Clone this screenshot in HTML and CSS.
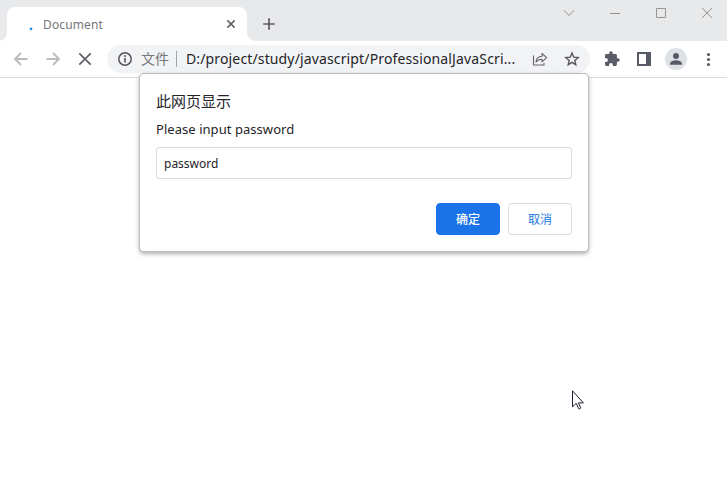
FILE: index.html
```html
<!DOCTYPE html>
<html lang="zh-CN">
<head>
<meta charset="utf-8">
<title>Document</title>
<link rel="stylesheet" href="styles.css">
</head>
<body>
<div class="browser">
  <header class="tabstrip">
    <div class="tab">
      <svg class="spinner" width="16" height="16" viewBox="0 0 16 16"><path d="M7 13.600 9 12.200" stroke="#1a86e0" stroke-width="2.200" fill="none"/></svg>
      <span class="tab-title">Document</span>
      <svg width="16" height="16" viewBox="0 0 16 16"><path d="m4.400 4.400 7.200 7.200m0-7.200-7.200 7.200" stroke="#5e6064" stroke-width="1.500"/></svg>
    </div>
    <svg class="new-tab" width="16" height="16" viewBox="0 0 16 16"><path d="M8 2.200v11.600M2.200 8h11.600" stroke="#5f5a62" stroke-width="1.700"/></svg>
    <div class="window-buttons">
      <svg width="46" height="26" viewBox="0 0 46 26"><path d="m18 10.300 5 5.200 5-5.200"/></svg>
      <svg width="46" height="26" viewBox="0 0 46 26"><path d="M18 13.500h10"/></svg>
      <svg width="46" height="26" viewBox="0 0 46 26"><path d="M18.500 8.500h9v9h-9z"/></svg>
      <svg width="46" height="26" viewBox="0 0 46 26"><path d="m18 8 10 10m0-10L18 18"/></svg>
    </div>
  </header>
  <nav class="toolbar">
    <svg class="tool" viewBox="0 0 32 32"><path d="M22.500 16H10m6-6-6 6 6 6" fill="none" stroke="#babcbe" stroke-width="1.900"/></svg>
    <svg class="tool" viewBox="0 0 32 32"><path d="M9.500 16H22m-6-6 6 6-6 6" fill="none" stroke="#babcbe" stroke-width="1.900"/></svg>
    <svg class="tool" viewBox="0 0 32 32"><path d="m10.300 10.300 11.400 11.400m0-11.400L10.300 21.700" stroke="#5c5f64" stroke-width="1.700"/></svg>
    <div class="omnibox">
      <svg class="info" width="16" height="16" viewBox="0 0 16 16"><circle cx="8" cy="8" r="6.200" fill="none" stroke="#57535a" stroke-width="1.500"/><path d="M8 7v4.500M8 4.300v1.700" stroke="#57535a" stroke-width="1.600"/></svg>
      <span class="scheme">文件</span>
      <span class="divider"></span>
      <span class="url">D:/project/study/javascript/ProfessionalJavaScri...</span>
      <svg class="share" width="16" height="16" viewBox="0 0 16 16"><path d="M1.500 4.500v9.500h10.500v-2" fill="none" stroke="#67646a" stroke-width="1.100"/><path d="M4 11c.3-3.700 2.300-5.500 6-5.700V2.500l4.600 4.200L10 10.800V8.200c-2.700 0-4.600.9-6 2.800z" fill="none" stroke="#67646a" stroke-width="1.100" stroke-linejoin="round"/></svg>
      <svg class="star" width="16" height="16" viewBox="0 0 16 16"><path d="m8 2 1.700 4.100 4.500.4-3.400 2.900 1 4.300L8 11.400l-3.800 2.300 1-4.300-3.400-2.900 4.500-.4z" fill="none" stroke="#5d585f" stroke-width="1.400"/></svg>
    </div>
    <svg class="tool" viewBox="0 0 32 32"><path transform="translate(7.600 7.600) scale(.7)" d="M20.500 11H19V7c0-1.100-.9-2-2-2h-4V3.500a2.500 2.500 0 0 0-5 0V5H4c-1.100 0-2 .9-2 2v3.800h1.500a2.700 2.700 0 0 1 0 5.400H2V20c0 1.100.9 2 2 2h3.800v-1.500a2.700 2.700 0 0 1 5.400 0V22H17c1.100 0 2-.9 2-2v-4h1.500a2.500 2.500 0 0 0 0-5z" fill="#5a5b64"/></svg>
    <svg class="tool" viewBox="0 0 32 32"><path fill-rule="evenodd" d="M9 9h14v14H9zm2 2v10h7V11z" fill="#565b66"/></svg>
    <svg class="tool" viewBox="0 0 32 32"><circle cx="16" cy="16" r="11" fill="#dee1e6"/><circle cx="16" cy="13" r="3" fill="#565b66"/><path d="M10 21.800v-1.300c0-2.200 4-3.200 6-3.200s6 1 6 3.200v1.300z" fill="#565b66"/></svg>
    <svg class="tool" viewBox="0 0 32 32"><g fill="#5b5a60"><circle cx="16.500" cy="11.500" r="1.600"/><circle cx="16.500" cy="16.500" r="1.600"/><circle cx="16.500" cy="21.500" r="1.600"/></g></svg>
  </nav>
  <main class="page">
    <section class="dialog">
      <h1>此网页显示</h1>
      <p>Please input password</p>
      <input type="text" value="password">
      <div class="actions">
        <button class="primary">确定</button>
        <button>取消</button>
      </div>
    </section>
    <svg class="cursor" width="13" height="21" viewBox="0 0 13 21"><path d="M.5.8v16l3.700-3.500 2.500 5.500q1.200.6 2-.9l-2.300-5h5z" fill="#fff" stroke="#24202f"/></svg>
  </main>
</div>
</body>
</html>
```
FILE: styles.css
```css
* { box-sizing: border-box; }
body { margin: 0; background: #fff; font-family: "Noto Sans", "Noto Sans CJK SC", sans-serif; color: #252529; }
svg { display: block; flex: none; }
.browser { width: 727px; height: 482px; overflow: hidden; display: flex; flex-direction: column; }
.tabstrip { height: 41px; flex: none; background: #e8e9eb; display: flex; align-items: flex-start; padding-left: 7px; }
.tab { position: relative; width: 240px; height: 34px; margin-top: 7px; padding: 0 8px 0 16px; border-radius: 8px 8px 0 0; background: #fff; display: flex; align-items: center; }
.tab::before, .tab::after { content: ""; position: absolute; bottom: 0; width: 8px; height: 8px; }
.tab::before { left: -8px; background: radial-gradient(circle at 0 0, transparent 7.5px, #fff 8px); }
.tab::after { right: -8px; background: radial-gradient(circle at 100% 0, transparent 7.5px, #fff 8px); }
.spinner { margin-right: 4px; }
.tab-title { flex: 1; font-size: 12px; letter-spacing: .12px; color: #75777b; line-height: 18px; padding-top: 2px; }
.new-tab { margin: 16px 0 0 14px; }
.window-buttons { display: flex; margin: 0 -3px 0 auto; fill: none; stroke: #99938f; stroke-width: 1; }
.toolbar { height: 37px; flex: none; display: flex; align-items: center; padding: 0 3px 0 5px; border-bottom: 1px solid #d9dadc; }
.tool { width: 32px; height: 32px; }
.omnibox { width: 483px; height: 28px; margin: 0 6px; padding: 0 10px; border-radius: 14px; background: #f1f3f4; display: flex; align-items: center; }
.scheme { margin-left: 8px; width: 28px; font-size: 14px; line-height: 20px; color: #75777b; white-space: nowrap; }
.divider { width: 1px; height: 16px; margin: 0 9px 0 7px; background: #a0a1a4; }
.url { width: 340px; font-size: 14px; line-height: 20px; letter-spacing: .14px; white-space: nowrap; }
.share { margin-left: 6px; }
.star { margin-left: auto; }
.page { position: relative; flex: 1; }
.dialog { position: absolute; left: 140px; top: -4px; width: 448px; height: 177px; padding: 16px; border-radius: 4px; background: #fff; box-shadow: 0 0 0 1px #bdbec0, 0 2px 4px 1px rgba(0,0,0,.32); }
.dialog h1 { margin: 0; font-size: 15px; line-height: 22px; font-weight: 400; }
.dialog p { margin: 7px 0 8px; font-size: 13px; line-height: 20px; letter-spacing: .05px; }
.dialog input { display: block; width: 416px; height: 32px; padding: 0 7px; border: 1px solid #d9dadc; border-radius: 3px; background: #fff; font: 12px "Noto Sans", sans-serif; color: #252529; outline: none; }
.actions { display: flex; justify-content: flex-end; gap: 8px; margin-top: 24px; }
.actions button { width: 64px; height: 32px; padding: 0 0 2px; border: 1px solid #dadce0; border-radius: 4px; background: #fff; color: #1a78dd; font: 12px "Noto Sans CJK SC", sans-serif; }
.actions .primary { background: #1a73e8; border-color: #1a73e8; color: #fff; font-weight: 500; }
.cursor { position: absolute; left: 572px; top: 312px; }
```
